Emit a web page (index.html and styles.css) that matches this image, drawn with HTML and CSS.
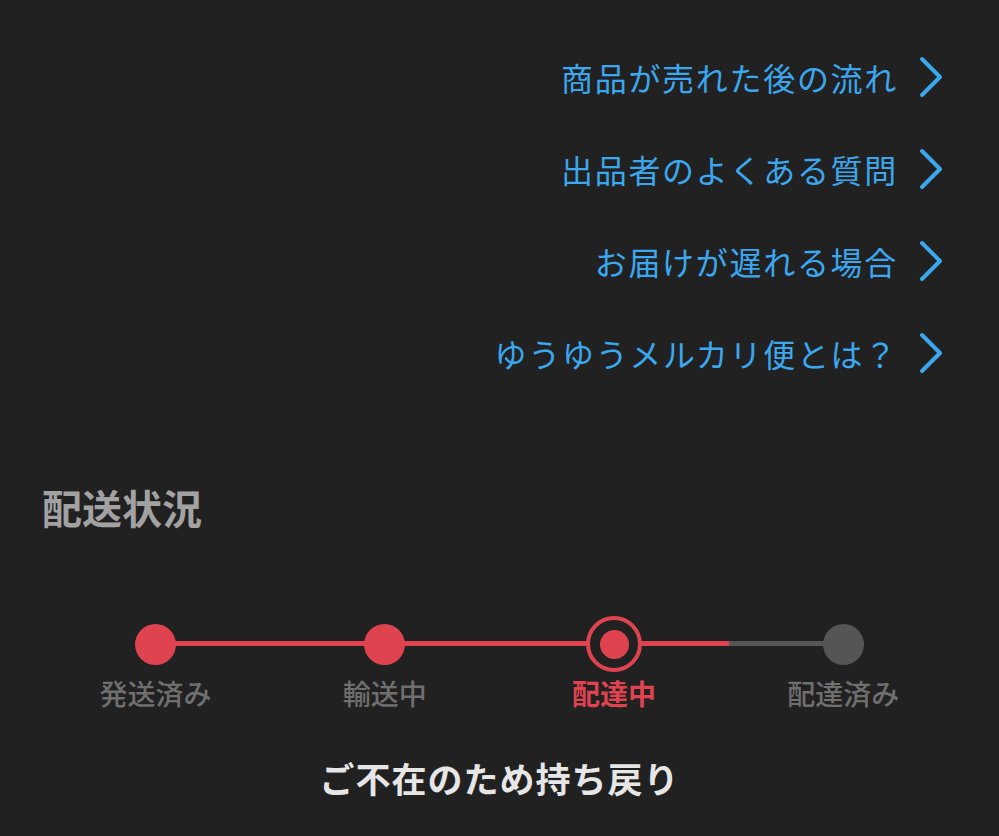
FILE: index.html
```html
<!DOCTYPE html>
<html lang="ja">
<head>
<meta charset="utf-8">
<link rel="stylesheet" href="styles.css">
</head>
<body>
<div class="page">
  <ul class="links">
    <li class="link"><span class="link-text">商品が売れた後の流れ</span><svg class="chev" viewBox="0 0 26 44"><path d="M4 4 L22 22 L4 40"/></svg></li>
    <li class="link"><span class="link-text">出品者のよくある質問</span><svg class="chev" viewBox="0 0 26 44"><path d="M4 4 L22 22 L4 40"/></svg></li>
    <li class="link"><span class="link-text">お届けが遅れる場合</span><svg class="chev" viewBox="0 0 26 44"><path d="M4 4 L22 22 L4 40"/></svg></li>
    <li class="link"><span class="link-text">ゆうゆうメルカリ便とは？</span><svg class="chev" viewBox="0 0 26 44"><path d="M4 4 L22 22 L4 40"/></svg></li>
  </ul>

  <h2 class="section-title">配送状況</h2>

  <div class="progress">
    <div class="track">
      <div class="line line-done"></div>
      <div class="line line-todo"></div>
    </div>
    <div class="steps">
      <div class="step done"><div class="dot-wrap"><span class="dot"></span></div><span class="label">発送済み</span></div>
      <div class="step done"><div class="dot-wrap"><span class="dot"></span></div><span class="label">輸送中</span></div>
      <div class="step current"><div class="dot-wrap"><span class="ring"><span class="dot"></span></span></div><span class="label">配達中</span></div>
      <div class="step todo"><div class="dot-wrap"><span class="dot"></span></div><span class="label">配達済み</span></div>
    </div>
  </div>

  <p class="status">ご不在のため持ち戻り</p>
</div>
</body>
</html>
```

FILE: styles.css
```css
html, body {
  margin: 0;
  padding: 0;
  background: #212121;
}
body {
  font-family: "Noto Sans CJK JP", "Noto Sans", sans-serif;
  width: 999px;
  height: 836px;
  overflow: hidden;
}
.page {
  padding-top: 31px;
}
.links {
  list-style: none;
  margin: 0;
  padding: 0 55px 0 0;
  display: flex;
  flex-direction: column;
  align-items: flex-end;
}
.link {
  height: 92px;
  display: flex;
  align-items: center;
  gap: 20px;
  color: #3aa7ee;
  font-size: 32px;
  letter-spacing: 1.7px;
}
.link-text {
  line-height: 92px;
}
.chev {
  width: 26px;
  height: 44px;
  display: block;
}
.chev path {
  fill: none;
  stroke: #3aa7ee;
  stroke-width: 4;
  stroke-linecap: round;
  stroke-linejoin: round;
}
.section-title {
  margin: 0;
  padding: 80px 0 0 42px;
  height: 56px;
  line-height: 56px;
  font-size: 40px;
  font-weight: 700;
  color: #a2a2a2;
}
.progress {
  position: relative;
  margin: 82px 41px 0 41px;
}
.track {
  position: absolute;
  left: 0;
  right: 0;
  top: 24px;
  height: 5px;
}
.line {
  position: absolute;
  top: 0;
  height: 5px;
}
.line-done {
  left: 12.5%;
  width: 62.5%;
  background: #df4350;
}
.line-todo {
  left: 75%;
  width: 12.5%;
  background: #555555;
}
.steps {
  position: relative;
  display: grid;
  grid-template-columns: repeat(4, 1fr);
}
.step {
  display: flex;
  flex-direction: column;
  align-items: center;
}
.dot-wrap {
  height: 54px;
  display: flex;
  align-items: center;
  justify-content: center;
}
.dot {
  display: block;
  width: 41px;
  height: 41px;
  border-radius: 50%;
  background: #df4350;
}
.step.todo .dot {
  background: #555555;
}
.ring {
  width: 48px;
  height: 48px;
  border: 4px solid #df4350;
  border-radius: 50%;
  background: #212121;
  display: flex;
  align-items: center;
  justify-content: center;
}
.ring .dot {
  width: 29px;
  height: 29px;
}
.label {
  margin-top: 4px;
  font-size: 28px;
  line-height: 36px;
  color: #6f6f6f;
  font-weight: 500;
}
.step.current .label {
  color: #df4350;
  font-weight: 700;
}
.status {
  margin: 44px 0 0 0;
  text-align: center;
  font-size: 35px;
  line-height: 46px;
  font-weight: 700;
  color: #e6e6e6;
  letter-spacing: 1px;
}
```
